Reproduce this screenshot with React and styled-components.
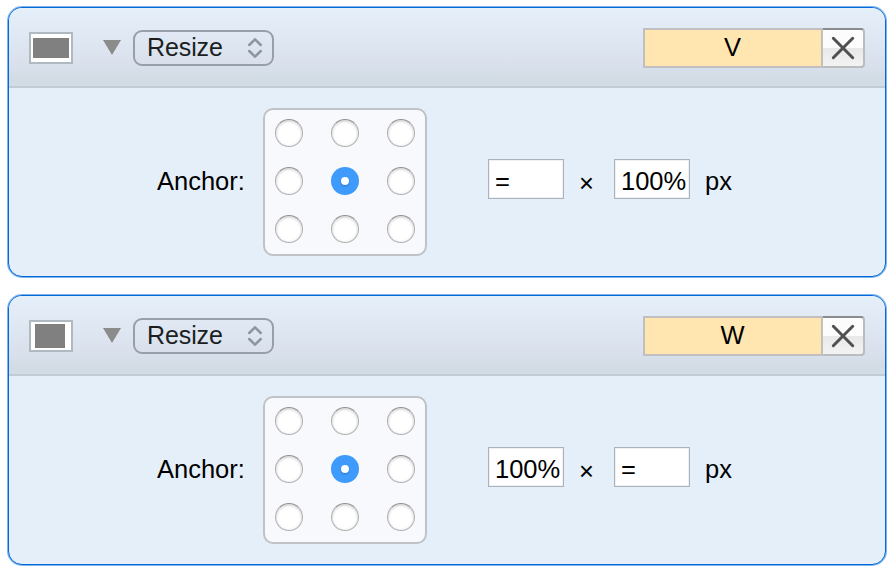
import React from "react";
import styled, { createGlobalStyle } from "styled-components";

const GlobalStyle = createGlobalStyle`
  body {
    margin: 0;
    background: #fff;
    color: #000;
    font: 25.5px/30px "Liberation Sans", Arial, sans-serif;
  }
  *, *::before, *::after { box-sizing: border-box; }
`;

const Page = styled.main`
  display: flex;
  flex-direction: column;
  gap: 18px;
  width: 894px;
  height: 572px;
  padding: 7px 8px;
`;

const Panel = styled.section`
  height: 270px;
  border: 1px solid #0668d6;
  border-radius: 14px;
  box-shadow: 0 0 0 1px #7db5ee;
  background: #e5effa;
  overflow: hidden;
`;

const Header = styled.header`
  display: flex;
  align-items: flex-start;
  height: 80px;
  padding: 20px 20px 0;
  border-bottom: 2px solid #c1cad5;
  background: linear-gradient(#e5effa 0%, #d9e0ec 75%, #d2dce4 90%, #d2dce4 100%);
`;

const Swatch = styled.div`
  display: flex;
  align-items: center;
  width: 44px;
  height: 32px;
  margin-top: 4px;
  padding-left: ${(p) => p.$inset}px;
  border: 2px solid #b0b8c0;
  background: #fff;
`;

const SwatchFill = styled.div`
  width: ${(p) => p.$width}px;
  height: ${(p) => p.$height}px;
  background: #808080;
`;

const Disclosure = styled.svg`
  width: 18px;
  height: 15px;
  margin: 12px 12px 0 30px;
  fill: #8b8b8b;
`;

const Select = styled.div`
  display: flex;
  justify-content: space-between;
  align-items: center;
  width: 141px;
  height: 36px;
  margin-top: 2px;
  padding: 0 10px 0 12px;
  border: 2px solid #989fa9;
  border-radius: 9px;
  color: #1c1f22;
  font-size: 25px;
  line-height: 30px;
  letter-spacing: -0.1px;
`;

const SelectValue = styled.span`
  padding-bottom: 2px;
`;

const Chevrons = styled.svg`
  width: 14px;
  height: 20px;
  fill: none;
  stroke: #8e959e;
  stroke-width: 2.5;
  stroke-linecap: round;
`;

const NameField = styled.div`
  width: 180px;
  height: 40px;
  margin-left: auto;
  padding: 2px 1px 0 0;
  border: 2px solid #c0c0c0;
  background: #ffe6b1;
  text-align: center;
`;

const CloseButton = styled.button`
  display: flex;
  justify-content: center;
  align-items: center;
  width: 42px;
  height: 40px;
  padding: 0;
  border: 2px solid #bcbcbc;
  border-top-color: #8c8c8c;
  border-left: 0;
  border-radius: 0 4px 4px 0;
  background: linear-gradient(#fcfcfc 0 50%, #e8e8e8 50%, #f3f3f3 100%);
`;

const Cross = styled.svg`
  width: 24px;
  height: 24px;
  stroke: #505050;
  stroke-width: 3;
  stroke-linecap: round;
`;

const Body = styled.div`
  display: flex;
  align-items: flex-start;
  padding: 20px 0 0 148px;
`;

const Label = styled.span`
  width: 106px;
  padding-top: 58px;
  white-space: nowrap;
`;

const Unit = styled.span`
  margin-left: 15px;
  padding-top: 58px;
`;

const AnchorGrid = styled.div`
  display: grid;
  grid-template-columns: repeat(3, 28px);
  grid-template-rows: repeat(3, 28px);
  column-gap: 28px;
  row-gap: 20px;
  width: 164px;
  height: 148px;
  margin-right: 61px;
  padding: 9px 10px;
  border: 2px solid #bfc3c7;
  border-radius: 10px;
  background: #f8f9fc;
`;

const Radio = styled.span`
  border: 1px solid #b0b0b0;
  border-top-color: #949494;
  border-radius: 50%;
  background: #fff;
  box-shadow: inset 0 1px 3px rgba(0, 0, 0, 0.24);
`;

const RadioSelected = styled.span`
  display: grid;
  place-items: center;
  border-radius: 50%;
  background: #3e9bfc;

  &::after {
    content: "";
    width: 8px;
    height: 8px;
    border-radius: 50%;
    background: #fff;
    box-shadow: 0 1px 2px rgba(0, 60, 140, 0.4);
  }
`;

const SizeInput = styled.div`
  width: 76px;
  height: 40px;
  margin-top: 51px;
  padding: 6px 0 0 6px;
  border: 1px solid #abb2bb;
  background: #fff;
  box-shadow: inset 0 0 0 1px #f0f0f0;
  white-space: nowrap;
`;

const Times = styled.span`
  width: 50px;
  padding: 60px 5px 0 0;
  text-align: center;
`;

function ResizePanel({ name, width, height, fill }) {
  return (
    <Panel>
      <Header>
        <Swatch $inset={fill.inset}>
          <SwatchFill $width={fill.width} $height={fill.height} />
        </Swatch>
        <Disclosure viewBox="0 0 18 15">
          <path d="M0 0H18L9 15Z" />
        </Disclosure>
        <Select>
          <SelectValue>Resize</SelectValue>
          <Chevrons viewBox="0 0 14 20">
            <path d="M1.2 7L7 1.4L12.8 7M1.2 13L7 18.6L12.8 13" />
          </Chevrons>
        </Select>
        <NameField>{name}</NameField>
        <CloseButton aria-label="Remove">
          <Cross viewBox="0 0 24 24">
            <path d="M2.3 2.3L21.7 21.7M21.7 2.3L2.3 21.7" />
          </Cross>
        </CloseButton>
      </Header>
      <Body>
        <Label>Anchor:</Label>
        <AnchorGrid>
          {Array.from({ length: 9 }, (_, i) =>
            i === 4 ? <RadioSelected key={i} /> : <Radio key={i} />
          )}
        </AnchorGrid>
        <SizeInput>{width}</SizeInput>
        <Times>×</Times>
        <SizeInput>{height}</SizeInput>
        <Unit>px</Unit>
      </Body>
    </Panel>
  );
}

export default function App() {
  return (
    <>
      <GlobalStyle />
      <Page>
        <ResizePanel
          name="V"
          width="="
          height="100%"
          fill={{ width: 36, height: 20, inset: 2 }}
        />
        <ResizePanel
          name="W"
          width="100%"
          height="="
          fill={{ width: 30, height: 24, inset: 4 }}
        />
      </Page>
    </>
  );
}
